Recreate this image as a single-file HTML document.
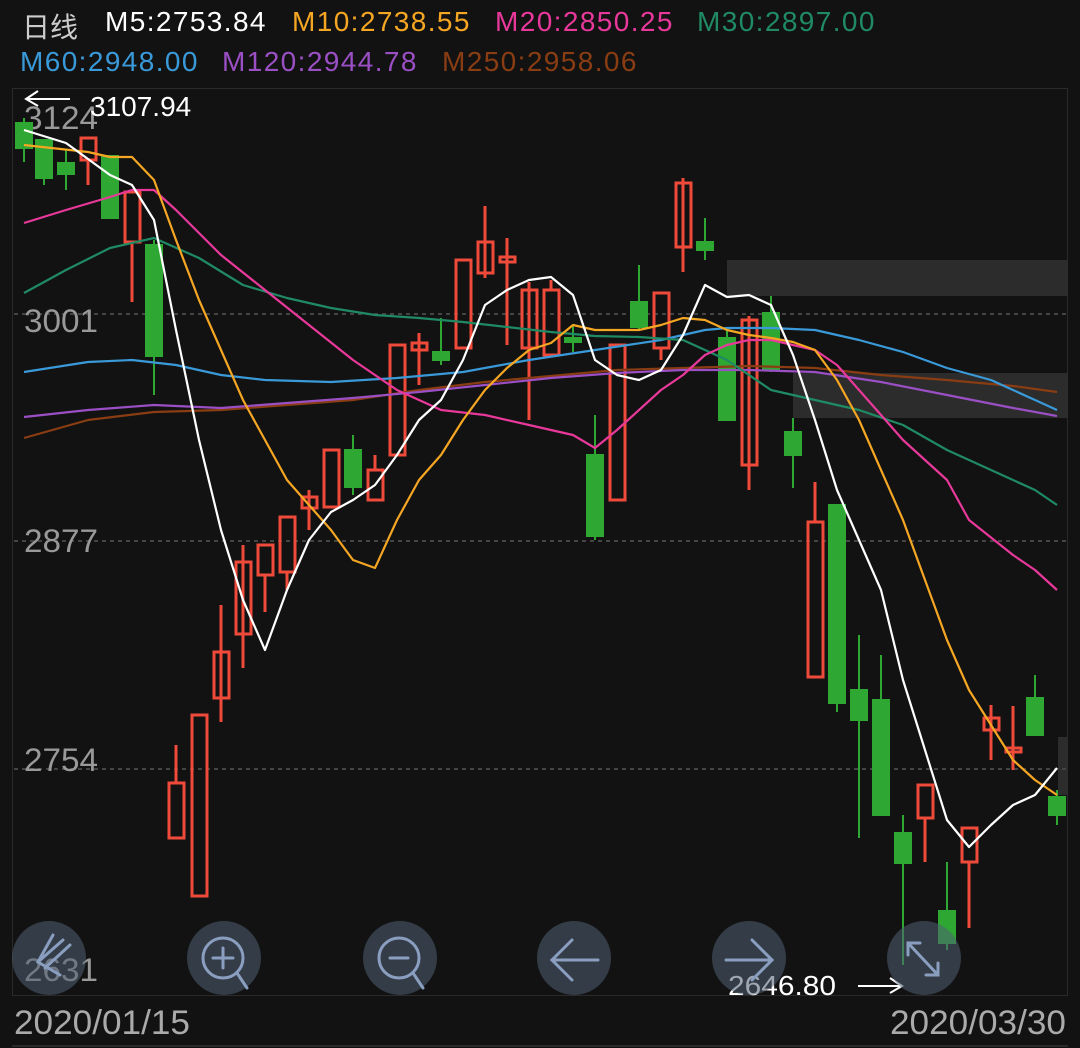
<!DOCTYPE html>
<html><head><meta charset="utf-8"><style>
body{margin:0;background:#121212;width:1080px;height:1048px;overflow:hidden;font-family:"Liberation Sans","Noto Sans CJK SC",sans-serif}
.h{position:absolute;font-size:28px;white-space:nowrap;letter-spacing:1.4px}
</style></head><body>
<div class="h" style="left:22px;top:6px;color:#ccc;letter-spacing:0">日线</div>
<div class="h" style="left:105px;top:6px;color:#fff">M5:2753.84</div>
<div class="h" style="left:292px;top:6px;color:#f5a623">M10:2738.55</div>
<div class="h" style="left:495px;top:6px;color:#e8399b">M20:2850.25</div>
<div class="h" style="left:697px;top:6px;color:#1f8a64">M30:2897.00</div>
<div class="h" style="left:20px;top:46px;color:#3a9ad9">M60:2948.00</div>
<div class="h" style="left:222px;top:46px;color:#9b4fc4">M120:2944.78</div>
<div class="h" style="left:442px;top:46px;color:#8a3d12">M250:2958.06</div>
<svg width="1080" height="1048" style="position:absolute;left:0;top:0" font-family="Liberation Sans, sans-serif">
<rect x="12.5" y="88.5" width="1055" height="907" fill="none" stroke="#2a2a2a"/>
<rect x="727" y="260" width="341" height="36" fill="#2c2c2c"/>
<rect x="793" y="373" width="275" height="45" fill="#2c2c2c"/>
<rect x="1058" y="737" width="10" height="58" fill="#2c2c2c"/>
<g stroke="#444" stroke-dasharray="4 4" stroke-width="2"><line x1="14" y1="314" x2="1066" y2="314"/><line x1="14" y1="541" x2="1066" y2="541"/><line x1="14" y1="769" x2="1066" y2="769"/></g>
<g fill="#999" font-size="32"><text x="24" y="129" textLength="74" lengthAdjust="spacingAndGlyphs">3124</text><text x="24" y="332" textLength="74" lengthAdjust="spacingAndGlyphs">3001</text><text x="24" y="552" textLength="74" lengthAdjust="spacingAndGlyphs">2877</text><text x="24" y="771" textLength="74" lengthAdjust="spacingAndGlyphs">2754</text><text x="24" y="981" textLength="74" lengthAdjust="spacingAndGlyphs">2631</text></g>
<g stroke="#2ea833" fill="#2ea833" stroke-width="2">
<line x1="24" y1="118" x2="24" y2="162"/><rect x="16" y="123" width="16" height="25"/>
<line x1="44" y1="140" x2="44" y2="185"/><rect x="36" y="140" width="16" height="38"/>
<line x1="66" y1="150" x2="66" y2="190"/><rect x="58" y="163" width="16" height="11"/>
<rect x="102" y="156" width="16" height="62"/>
<line x1="154" y1="240" x2="154" y2="395"/><rect x="146" y="245" width="16" height="111"/>
<line x1="353" y1="435" x2="353" y2="495"/><rect x="345" y="450" width="16" height="37"/>
<line x1="441" y1="318" x2="441" y2="365"/><rect x="433" y="352" width="16" height="8"/>
<line x1="573" y1="325" x2="573" y2="352"/><rect x="565" y="338" width="16" height="4"/>
<line x1="595" y1="415" x2="595" y2="540"/><rect x="587" y="455" width="16" height="81"/>
<line x1="639" y1="265" x2="639" y2="330"/><rect x="631" y="302" width="16" height="25"/>
<line x1="705" y1="218" x2="705" y2="260"/><rect x="697" y="242" width="16" height="8"/>
<line x1="727" y1="330" x2="727" y2="420"/><rect x="719" y="338" width="16" height="82"/>
<line x1="771" y1="296" x2="771" y2="372"/><rect x="763" y="313" width="16" height="57"/>
<line x1="793" y1="418" x2="793" y2="488"/><rect x="785" y="432" width="16" height="23"/>
<line x1="837" y1="505" x2="837" y2="712"/><rect x="829" y="505" width="16" height="198"/>
<line x1="859" y1="635" x2="859" y2="838"/><rect x="851" y="690" width="16" height="30"/>
<line x1="881" y1="655" x2="881" y2="815"/><rect x="873" y="700" width="16" height="115"/>
<line x1="903" y1="815" x2="903" y2="965"/><rect x="895" y="833" width="16" height="30"/>
<line x1="947" y1="862" x2="947" y2="950"/><rect x="939" y="911" width="16" height="32"/>
<line x1="1035" y1="675" x2="1035" y2="735"/><rect x="1027" y="698" width="16" height="37"/>
<line x1="1057" y1="790" x2="1057" y2="825"/><rect x="1049" y="797" width="16" height="18"/>
</g>
<g stroke="#f04a3a" fill="none" stroke-width="3">
<line x1="88" y1="160" x2="88" y2="185"/><rect x="81" y="138" width="15" height="22"/>
<line x1="132" y1="242" x2="132" y2="302"/><rect x="125" y="192" width="15" height="50"/>
<line x1="176" y1="745" x2="176" y2="783"/><rect x="169" y="783" width="15" height="55"/>
<rect x="192" y="715" width="15" height="181"/>
<line x1="221" y1="605" x2="221" y2="722"/><rect x="214" y="652" width="15" height="46"/>
<line x1="243" y1="545" x2="243" y2="668"/><rect x="236" y="562" width="15" height="72"/>
<line x1="265" y1="575" x2="265" y2="612"/><rect x="258" y="545" width="15" height="30"/>
<line x1="287" y1="572" x2="287" y2="590"/><rect x="280" y="517" width="15" height="55"/>
<line x1="309" y1="490" x2="309" y2="530"/><rect x="302" y="497" width="15" height="11"/>
<rect x="324" y="450" width="15" height="57"/>
<line x1="375" y1="455" x2="375" y2="470"/><rect x="368" y="470" width="15" height="30"/>
<rect x="390" y="345" width="15" height="110"/>
<line x1="419" y1="333" x2="419" y2="385"/><rect x="412" y="343" width="15" height="7"/>
<rect x="456" y="260" width="15" height="88"/>
<line x1="485" y1="206" x2="485" y2="278"/><rect x="478" y="242" width="15" height="31"/>
<line x1="507" y1="238" x2="507" y2="345"/><rect x="500" y="257" width="15" height="5"/>
<line x1="529" y1="282" x2="529" y2="420"/><rect x="522" y="290" width="15" height="58"/>
<line x1="551" y1="280" x2="551" y2="290"/><rect x="544" y="290" width="15" height="65"/>
<rect x="610" y="345" width="15" height="155"/>
<line x1="661" y1="348" x2="661" y2="360"/><rect x="654" y="293" width="15" height="55"/>
<line x1="683" y1="178" x2="683" y2="272"/><rect x="676" y="183" width="15" height="64"/>
<line x1="749" y1="316" x2="749" y2="490"/><rect x="742" y="320" width="15" height="145"/>
<line x1="815" y1="482" x2="815" y2="522"/><rect x="808" y="522" width="15" height="155"/>
<line x1="925" y1="818" x2="925" y2="862"/><rect x="918" y="785" width="15" height="33"/>
<line x1="969" y1="862" x2="969" y2="928"/><rect x="962" y="828" width="15" height="34"/>
<line x1="991" y1="705" x2="991" y2="760"/><rect x="984" y="718" width="15" height="12"/>
<line x1="1013" y1="706" x2="1013" y2="770"/><rect x="1006" y="748" width="15" height="4"/>
</g>
<g fill="none" stroke-width="2.2" stroke-linejoin="round">
<polyline stroke="#8a3d12" points="24,438 88,420 154,412 221,410 287,405 353,400 419,390 485,382 551,376 617,370 683,368 749,366 815,368 881,375 947,380 1013,386 1057,392"/>
<polyline stroke="#9b4fc4" points="24,417 88,410 154,405 221,408 287,403 353,398 419,392 485,385 551,378 617,373 683,370 749,370 815,372 881,382 947,395 1013,408 1057,416"/>
<polyline stroke="#3a9ad9" points="24,372 88,362 132,360 176,365 221,375 265,380 331,382 397,378 463,372 529,360 595,350 661,340 705,330 727,328 771,328 815,330 859,340 903,352 947,368 991,380 1035,400 1057,410"/>
<polyline stroke="#1f8a64" points="24,293 66,270 110,248 154,238 199,258 243,285 287,298 331,308 375,315 419,318 463,322 507,327 551,332 595,336 639,337 683,340 727,360 771,390 815,400 859,410 903,425 947,450 991,470 1035,490 1057,505"/>
<polyline stroke="#e8399b" points="24,223 66,210 110,197 132,190 154,190 176,210 221,255 265,290 309,325 353,360 397,390 441,410 485,415 529,425 573,435 595,448 617,430 661,390 683,375 705,355 727,345 749,340 771,340 793,345 815,350 837,365 859,390 903,440 947,480 969,520 1013,555 1035,570 1057,590"/>
<polyline stroke="#f5a623" points="24,145 88,152 110,157 132,157 154,180 176,240 199,300 221,350 243,400 265,440 287,480 309,505 331,530 353,560 375,568 397,520 419,480 441,455 463,420 485,390 507,368 529,350 551,343 573,325 595,330 617,330 639,330 661,325 683,318 705,320 727,330 749,335 771,338 793,342 815,350 837,380 859,420 881,470 903,520 925,580 947,640 969,690 991,725 1013,760 1035,780 1057,795"/>
<polyline stroke="#fff" points="24,130 66,143 110,175 132,185 154,220 176,330 199,440 221,530 243,600 265,650 287,590 309,540 331,512 353,500 375,485 397,455 419,420 441,400 463,360 485,305 507,290 529,280 551,277 573,295 595,360 617,375 639,380 661,370 683,335 705,285 727,297 749,295 771,305 793,355 815,420 837,490 859,540 881,590 903,680 925,750 947,820 969,847 991,825 1013,805 1035,795 1057,768"/>
</g>
<g stroke="#fff" stroke-width="2" fill="none"><line x1="26" y1="99" x2="70" y2="99"/><polyline points="38,91 26,99 38,106"/>
<line x1="858" y1="986" x2="902" y2="986"/><polyline points="890,978 902,986 890,993"/></g>
<text x="90" y="116" fill="#fff" font-size="28">3107.94</text>
<text x="728" y="995" fill="#fff" font-size="28" textLength="108" lengthAdjust="spacingAndGlyphs">2646.80</text>
<g fill="rgba(80,95,115,0.55)"><circle cx="49" cy="958" r="37"/><circle cx="224" cy="958" r="37"/><circle cx="400" cy="958" r="37"/><circle cx="574" cy="958" r="37"/><circle cx="749" cy="958" r="37"/><circle cx="924" cy="958" r="37"/></g>
<g stroke="#8a9fc0" stroke-width="3" fill="none" stroke-linecap="round">
<polyline points="63,940 38,962"/><polyline points="70,945 45,968"/><polyline points="53,935 38,962 60,975"/>
<circle cx="223" cy="958" r="20"/><line x1="237" y1="973" x2="247" y2="988"/><line x1="223" y1="948" x2="223" y2="968"/><line x1="213" y1="958" x2="233" y2="958"/>
<circle cx="399" cy="958" r="20"/><line x1="413" y1="973" x2="423" y2="988"/><line x1="390" y1="958" x2="408" y2="958"/>
<line x1="552" y1="960" x2="598" y2="960"/><polyline points="572,940 552,960 572,980"/>
<line x1="726" y1="960" x2="772" y2="960"/><polyline points="752,940 772,960 752,980"/>
<line x1="908" y1="943" x2="938" y2="975"/><polyline points="908,955 908,943 920,943"/><polyline points="926,975 938,975 938,963"/>
</g>
<g fill="#aaa" font-size="34"><text x="14" y="1034" textLength="176" lengthAdjust="spacingAndGlyphs">2020/01/15</text><text x="890" y="1034" textLength="176" lengthAdjust="spacingAndGlyphs">2020/03/30</text></g>
<line x1="12" y1="1046" x2="1068" y2="1046" stroke="#2a2a2a" stroke-width="2"/>
</svg>
</body></html>
